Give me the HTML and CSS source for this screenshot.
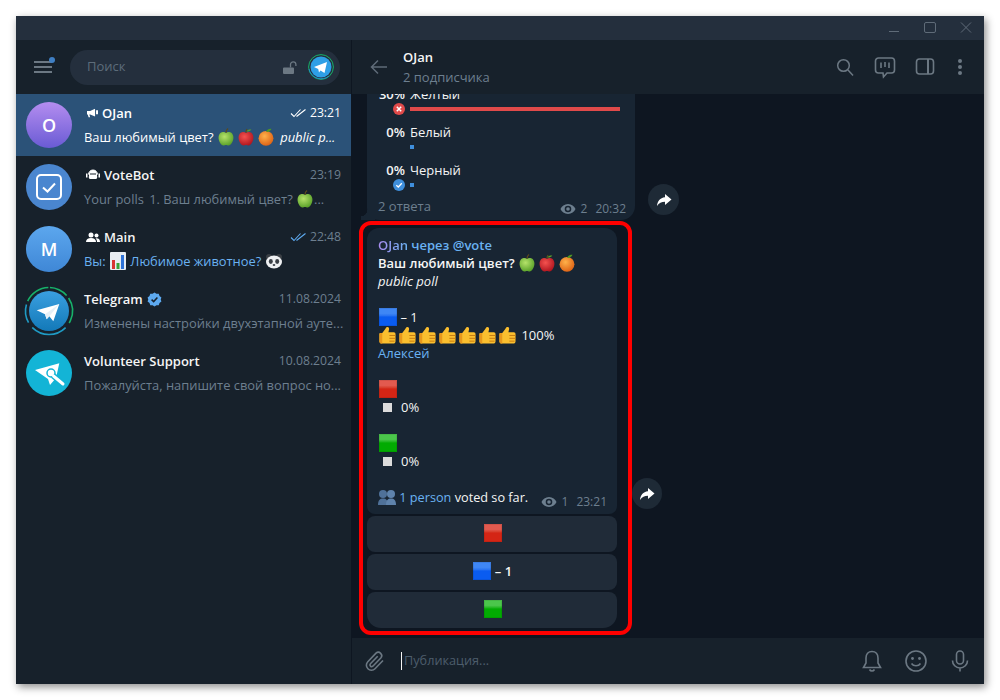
FILE: index.html
```html
<!DOCTYPE html>
<html lang="ru">
<head>
    <meta charset="UTF-8">
    <title>Telegram</title>
    <link rel="stylesheet" href="styles.css">
</head>
<body>
    <svg class="defs" aria-hidden="true">
        <defs>
            <radialGradient id="g-green" cx="40%" cy="35%" r="75%"><stop offset="0" stop-color="#b5e26a"/><stop offset="1" stop-color="#4f9a22"/></radialGradient>
            <radialGradient id="g-red" cx="40%" cy="35%" r="75%"><stop offset="0" stop-color="#f4524f"/><stop offset="1" stop-color="#a80f1a"/></radialGradient>
            <radialGradient id="g-orange" cx="40%" cy="35%" r="75%"><stop offset="0" stop-color="#ffb14a"/><stop offset="1" stop-color="#d9590f"/></radialGradient>
            <linearGradient id="g-tg" x1="0" y1="0" x2="0" y2="1"><stop offset="0" stop-color="#3a9fe0"/><stop offset="1" stop-color="#1379b8"/></linearGradient>
            <symbol id="apple-green" viewBox="1 .5 16 17">
                <path d="M9 5c2-1.400 6.500-1 7 4 .3 4-2.500 8-4.500 8-1 0-1.600-.5-2.500-.5S7.500 17 6.500 17C4.500 17 1.700 13 2 9 2.500 4 7 3.600 9 5z" fill="url(#g-green)"/>
                <path d="M9 5c0-1.500.5-3 2-4" fill="none" stroke="#5b4a1c" stroke-width="1.200"/>
            </symbol>
            <symbol id="apple-red" viewBox="1 .5 16 17">
                <path d="M9 5c2-1.400 6.500-1 7 4 .3 4-2.500 8-4.500 8-1 0-1.600-.5-2.500-.5S7.500 17 6.500 17C4.500 17 1.700 13 2 9 2.500 4 7 3.600 9 5z" fill="url(#g-red)"/>
                <path d="M9 5c0-1.500.3-2.500 1-3.500" fill="none" stroke="#5b4a1c" stroke-width="1.200"/>
                <path d="M9.500 3.500c1-1.500 3-2 4.500-1.500-.8 1.500-2.500 2-4.500 1.500z" fill="#5aa02c"/>
            </symbol>
            <symbol id="orange" viewBox="1.500 1 15 16.500">
                <circle cx="9" cy="10.500" r="6.800" fill="url(#g-orange)"/>
                <path d="M9 4.500c.8-1.800 2.800-3 5-2.800-.7 2-2.800 3.200-5 2.800z" fill="#4f9a22"/>
            </symbol>
            <symbol id="thumb" viewBox="-.5 0 19 18">
                <path d="M1 8c0-.6.4-1 1-1h2l3-4C8 1 8.500.5 9.500.5c1.300 0 2 1 1.700 2.500L10.500 6H16c1.500 0 2 1 2 2v7.500c0 1.500-1 2.500-2.500 2.500h-12C2 18 1 17 1 15.500z" fill="#fbbf2f"/>
                <path d="M4 7.500V18H3.500C2 18 1 17 1 15.500V8c0-.6.4-1 1-1h2z" fill="#e9981c"/>
                <path d="M11.500 9.500H18M11.500 12.500H18M11.500 15.500H17" stroke="#c67a10" stroke-width="1"/>
            </symbol>
            <symbol id="eye" viewBox="0 0 16 12">
                <path d="M8 1C4.500 1 1.700 3.200.5 6 1.700 8.800 4.500 11 8 11s6.300-2.200 7.500-5C14.300 3.200 11.500 1 8 1zm0 8.300A3.300 3.300 0 1 1 8 2.700a3.300 3.300 0 0 1 0 6.600zM8 4.200a1.800 1.800 0 1 0 0 3.600 1.800 1.800 0 0 0 0-3.600z" fill="currentColor"/>
            </symbol>
            <symbol id="share" viewBox="0 0 16 14">
                <path d="M9 1l6.500 5.500L9 12V8.700C5.500 8.700 3 9.800 1 13c.4-4.800 3-8.300 8-8.800z" fill="#fff"/>
            </symbol>
            <symbol id="checks" viewBox="0 0 17 10">
                <path d="M1 5.500 4 8.500 10.500 1.500M6.500 8.500 15.500 1.500" fill="none" stroke="currentColor" stroke-width="1.100"/>
            </symbol>
        </defs>
    </svg>

    <div class="window">
        <div class="titlebar">
            <svg class="win-btn" viewBox="0 0 12 12"><path d="M1 9.500h10" stroke="#5f6b78" fill="none"/></svg>
            <svg class="win-btn" viewBox="0 0 12 12"><rect x=".5" y=".5" width="11" height="10" rx="1.500" stroke="#5f6b78" fill="none"/></svg>
            <svg class="win-btn" viewBox="0 0 12 12"><path d="M1 .5l10 10M11 .5 1 10.500" stroke="#5f6b78" fill="none"/></svg>
        </div>
        <div class="main">
            <aside class="sidebar">
                <div class="side-head">
                    <button class="menu-btn">
                        <span class="bar"></span><span class="bar"></span><span class="bar"></span>
                        <span class="dot"></span>
                    </button>
                    <div class="search">
                        <span class="search-text">Поиск</span>
                        <svg class="lock" viewBox="0 0 14 13"><path d="M1 6.500h9a1 1 0 0 1 1 1V12a1 1 0 0 1-1 1H1a1 1 0 0 1-1-1V7.500a1 1 0 0 1 1-1z" fill="#6c7883"/><path d="M7.500 6.500V3.500a2.700 2.700 0 0 1 5.400 0V5" fill="none" stroke="#6c7883" stroke-width="1.300"/></svg>
                        <svg class="story" viewBox="0 0 26 26">
                            <circle cx="13" cy="13" r="12.400" fill="none" stroke="#17b26a" stroke-width="1"/>
                            <path d="M1 15a12.400 12.400 0 0 0 20 7" fill="none" stroke="#1f8fc4" stroke-width="1"/>
                            <circle cx="13" cy="13" r="10.500" fill="#2e9fe6"/>
                            <path d="M6 13 19 8 16.500 19l-4-2.500-1.500 2-.8-3.500z" fill="#fff"/>
                        </svg>
                    </div>
                </div>

                <div class="chat active">
                    <div class="avatar av-purple">O</div>
                    <div class="chat-body">
                        <div class="chat-top">
                            <svg class="kind kind-small" viewBox="0 0 14 12"><path d="M0 3.500h4L9.500.8a.5.5 0 0 1 .8.4v8.600a.5.5 0 0 1-.8.400L4 8H3l1 3.500H2L1 8H0zM11.500 2.500h2.500v5h-2.500z" fill="#fff"/></svg>
                            <span class="name">OJan</span>
                            <svg class="tick" viewBox="0 0 17 10"><use href="#checks"/></svg>
                            <span class="time">23:21</span>
                        </div>
                        <div class="chat-text">Ваш любимый цвет? <svg class="emoji"><use href="#apple-green"/></svg><svg class="emoji"><use href="#apple-red"/></svg><svg class="emoji"><use href="#orange"/></svg> <i>public p...</i></div>
                    </div>
                </div>

                <div class="chat">
                    <div class="avatar av-blue">
                        <svg class="av-icon" viewBox="0 0 46 46"><rect x="11" y="11" width="24" height="24" rx="4" fill="none" stroke="#fff" stroke-width="2"/><path d="M17 23.500l4.500 4L29 19.500" fill="none" stroke="#fff" stroke-width="2"/></svg>
                    </div>
                    <div class="chat-body">
                        <div class="chat-top">
                            <svg class="kind" viewBox="0 0 14 12"><path d="M3 7V5a4 4 0 0 1 8 0v2a2 2 0 0 1-2 3H5a2 2 0 0 1-2-3z" fill="#fff"/><path d="M2.500 5.500a4.500 4.500 0 0 1 9 0" fill="none" stroke="#fff"/><rect x="0" y="4.500" width="1.500" height="4" fill="#fff"/><rect x="12.500" y="4.500" width="1.500" height="4" fill="#fff"/><rect x="4" y="4.500" width="6" height="1" fill="#17212b"/></svg>
                            <span class="name">VoteBot</span>
                            <span class="time">23:19</span>
                        </div>
                        <div class="chat-text">Your polls <span class="gap"></span>1. Ваш любимый цвет? <svg class="emoji tight"><use href="#apple-green"/></svg>...</div>
                    </div>
                </div>

                <div class="chat">
                    <div class="avatar av-sky">M</div>
                    <div class="chat-body">
                        <div class="chat-top">
                            <svg class="kind" viewBox="0 0 14 12"><circle cx="5" cy="4" r="2.500" fill="#fff"/><path d="M0 11c0-2.800 2-4 5-4s5 1.200 5 4z" fill="#fff"/><circle cx="10.500" cy="4.500" r="2" fill="#fff"/><path d="M10.500 7.300c2 0 3.500 1 3.500 3.700h-3c0-1.500-.3-2.700-1.500-3.500z" fill="#fff"/></svg>
                            <span class="name">Main</span>
                            <svg class="tick tick-blue" viewBox="0 0 17 10"><use href="#checks"/></svg>
                            <span class="time">22:48</span>
                        </div>
                        <div class="chat-text link">Вы: <svg class="emoji tight" viewBox="0 0 18 18"><rect x="1" width="16" height="18" rx="1" fill="#e8edf2"/><rect x="3" y="8" width="3" height="9" fill="#d93434"/><rect x="7.500" y="11" width="3" height="6" fill="#3aa23a"/><rect x="12" y="3" width="3" height="14" fill="#2f72d6"/></svg> Любимое животное? <svg class="emoji" viewBox="0 0 18 18"><circle cx="4" cy="5" r="3" fill="#3a3f45"/><circle cx="14" cy="5" r="3" fill="#3a3f45"/><ellipse cx="9" cy="10" rx="8" ry="6.500" fill="#eef0f2"/><ellipse cx="5.800" cy="9.500" rx="2" ry="2.400" fill="#3a3f45"/><ellipse cx="12.200" cy="9.500" rx="2" ry="2.400" fill="#3a3f45"/><ellipse cx="9" cy="13" rx="1.300" ry="1" fill="#3a3f45"/></svg></div>
                    </div>
                </div>

                <div class="chat">
                    <div class="avatar">
                        <svg class="av-icon" viewBox="0 0 46 46">
                            <circle cx="23" cy="23" r="23.500" fill="none" stroke="#17b26a" stroke-width="1.600" stroke-dasharray="25.800 1.600 18.900 3.300 26.200 72" transform="rotate(-155 23 23)"/>
                            <circle cx="23" cy="23" r="23.500" fill="none" stroke="#1f9bc4" stroke-width="1.600" stroke-dasharray="36.900 6.200 18.500 86" transform="rotate(45 23 23)"/>
                            <circle cx="23" cy="23" r="20" fill="url(#g-tg)"/>
                            <path d="M33.300 16 10.700 22.300 19 26.300 20.700 31.300 23.300 28.300 27.300 33.300z" fill="#fff"/>
                            <path d="M33.300 16 19 26.300 20.700 31.300 23.300 28.300z" fill="#e6f0f7"/>
                        </svg>
                    </div>
                    <div class="chat-body">
                        <div class="chat-top">
                            <span class="name">Telegram</span>
                            <svg class="badge" viewBox="0 0 18 18"><path d="M9 .5l2.300 1.700 2.800-.1.900 2.700 2.300 1.700-.8 2.500.8 2.500-2.300 1.700-.9 2.700-2.800-.1L9 17.500l-2.300-1.700-2.800.1-.9-2.700L.7 11.500 1.500 9 .7 6.500 3 4.800l.9-2.700 2.800.1z" fill="#5da9ef"/><path d="M5.500 9.200 8 11.500l4.500-4.800" fill="none" stroke="#17212b" stroke-width="1.800"/></svg>
                            <span class="time">11.08.2024</span>
                        </div>
                        <div class="chat-text">Изменены настройки двухэтапной ауте...</div>
                    </div>
                </div>

                <div class="chat">
                    <div class="avatar av-teal">
                        <svg class="av-icon" viewBox="0 0 46 46">
                            <path d="M9 20 33.300 13.300 30 28 24 35 22 29z" fill="#fff"/>
                            <circle cx="25" cy="23" r="4" fill="none" stroke="#13b4d6" stroke-width="1.500"/>
                            <path d="M27 25.500 37 34" stroke="#13b4d6" stroke-width="6" fill="none"/>
                            <path d="M27.500 26 37 34" stroke="#fff" stroke-width="3" stroke-linecap="round" fill="none"/>
                        </svg>
                    </div>
                    <div class="chat-body">
                        <div class="chat-top">
                            <span class="name">Volunteer Support</span>
                            <span class="time">10.08.2024</span>
                        </div>
                        <div class="chat-text">Пожалуйста, напишите свой вопрос но...</div>
                    </div>
                </div>
            </aside>

            <section class="conversation">
                <header class="conv-head">
                    <svg class="back" viewBox="0 0 18 16"><path d="M17 8H2M8 1.500 1.500 8 8 14.500" fill="none" stroke="#5f6b78" stroke-width="1.500"/></svg>
                    <div class="conv-title">
                        <div class="conv-name">OJan</div>
                        <div class="conv-sub">2 подписчика</div>
                    </div>
                    <svg class="head-icon" viewBox="0 0 24 24"><circle cx="10.500" cy="10.500" r="5.800" fill="none" stroke="#6c7883" stroke-width="1.500"/><path d="M15 15l5 5.500" stroke="#6c7883" stroke-width="1.500"/></svg>
                    <svg class="head-icon" viewBox="0 0 24 24"><path d="M5.500 3h13A3 3 0 0 1 21.500 6v9a3 3 0 0 1-3 3H14l-3.500 4-.5-4H5.500a3 3 0 0 1-3-3V6a3 3 0 0 1 3-3z" fill="none" stroke="#6c7883" stroke-width="1.600"/><path d="M8 7.500v5.500M12 7v5M16 7.500v5.500" stroke="#6c7883" stroke-width="1.600"/></svg>
                    <svg class="head-icon" viewBox="0 0 24 24"><rect x="3.500" y="4" width="17" height="15" rx="3" fill="none" stroke="#6c7883" stroke-width="1.600"/><path d="M15 4v15" stroke="#6c7883" stroke-width="2"/></svg>
                    <svg class="head-icon dots" viewBox="0 0 8 24"><circle cx="4" cy="6" r="2" fill="#6c7883"/><circle cx="4" cy="12" r="2" fill="#6c7883"/><circle cx="4" cy="18" r="2" fill="#6c7883"/></svg>
                </header>

                <div class="messages">
                    <div class="msg-row first">
                        <div class="bubble poll">
                            <div class="poll-row">
                                <span class="pct">30%</span><span>Желтый</span>
                                <svg class="mark" viewBox="0 0 12 12"><circle cx="6" cy="6" r="6" fill="#e04a4a"/><path d="M3.800 3.800l4.400 4.400M8.200 3.800 3.800 8.200" stroke="#fff" stroke-width="1.500"/></svg>
                                <span class="poll-bar full"></span>
                            </div>
                            <div class="poll-row">
                                <span class="pct">0%</span><span>Белый</span>
                                <span></span><span class="poll-bar"></span>
                            </div>
                            <div class="poll-row">
                                <span class="pct">0%</span><span>Черный</span>
                                <svg class="mark" viewBox="0 0 12 12"><circle cx="6" cy="6" r="6" fill="#3f8fdc"/><path d="M3.300 6.200 5.300 8 8.800 4.300" fill="none" stroke="#fff" stroke-width="1.300"/></svg>
                                <span class="poll-bar"></span>
                            </div>
                            <div class="poll-foot">
                                <span class="answers">2 ответа</span>
                                <span class="meta"><svg class="eye"><use href="#eye"/></svg>2<span class="meta-time">20:32</span></span>
                            </div>
                        </div>
                        <button class="share"><svg class="share-icon"><use href="#share"/></svg></button>
                    </div>

                    <div class="msg-row">
                        <div class="highlight">
                            <div class="bubble post">
                                <div class="sender"><span class="sender-name">OJan</span> через @vote</div>
                                <div class="strong">Ваш любимый цвет? <svg class="emoji"><use href="#apple-green"/></svg><svg class="emoji"><use href="#apple-red"/></svg><svg class="emoji"><use href="#orange"/></svg></div>
                                <div><i>public poll</i></div>
                                <div class="blank"></div>
                                <div><span class="sq blue"></span> – 1</div>
                                <div class="thumbs"><svg class="emoji"><use href="#thumb"/></svg><svg class="emoji"><use href="#thumb"/></svg><svg class="emoji"><use href="#thumb"/></svg><svg class="emoji"><use href="#thumb"/></svg><svg class="emoji"><use href="#thumb"/></svg><svg class="emoji"><use href="#thumb"/></svg><svg class="emoji"><use href="#thumb"/></svg> 100%</div>
                                <div class="link">Алексей</div>
                                <div class="blank"></div>
                                <div><span class="sq red"></span></div>
                                <div class="vote-line"><span class="white-sq"></span>0%</div>
                                <div class="blank"></div>
                                <div><span class="sq green"></span></div>
                                <div class="vote-line"><span class="white-sq"></span>0%</div>
                                <div class="blank"></div>
                                <div class="post-foot">
                                    <span class="foot-text"><svg class="emoji tight" viewBox="0 0 18 18"><circle cx="5" cy="6" r="4" fill="#4f7199"/><path d="M0 17c0-5 2-6.500 5-6.500s5 1.500 5 6.500z" fill="#4f7199"/><circle cx="13" cy="6" r="4" fill="#5f83ac"/><path d="M8 17c0-5 2-6.500 5-6.500s5 1.500 5 6.500z" fill="#5f83ac"/></svg> <span class="link">1 person</span> voted so far.</span>
                                    <span class="meta"><svg class="eye"><use href="#eye"/></svg>1<span class="meta-time">23:21</span></span>
                                </div>
                            </div>
                            <div class="keyboard">
                                <button class="key"><span class="sq red"></span></button>
                                <button class="key"><span class="sq blue"></span> – 1</button>
                                <button class="key"><span class="sq green"></span></button>
                            </div>
                        </div>
                        <button class="share second"><svg class="share-icon"><use href="#share"/></svg></button>
                    </div>
                </div>

                <footer class="composer">
                    <svg class="clip" viewBox="0 0 24 24"><path d="M20 11.500 12 19.700a5 5 0 0 1-7.200-7L13 4.200a3.400 3.400 0 0 1 4.800 4.800l-8 8.200a1.700 1.700 0 0 1-2.400-2.400l7.300-7.500" fill="none" stroke="#6c7883" stroke-width="1.600"/></svg>
                    <span class="caret"></span>
                    <span class="placeholder">Публикация...</span>
                    <svg class="foot-icon" viewBox="0 0 24 24"><path d="M12 2.500c-3.800 0-6 2.900-6 6.500v5L3.500 18.500h17L18 14V9c0-3.600-2.200-6.500-6-6.500zM9.500 20.500c.6 1 1.500 1.500 2.500 1.500s1.900-.5 2.500-1.500" fill="none" stroke="#6c7883" stroke-width="1.600"/></svg>
                    <svg class="foot-icon" viewBox="0 0 24 24"><circle cx="12" cy="12" r="10" fill="none" stroke="#6c7883" stroke-width="1.600"/><circle cx="8.500" cy="9.500" r="1.400" fill="#6c7883"/><circle cx="15.500" cy="9.500" r="1.400" fill="#6c7883"/><path d="M7.500 14.500c1 1.500 2.700 2.300 4.500 2.300s3.500-.8 4.500-2.300" fill="none" stroke="#6c7883" stroke-width="1.600"/></svg>
                    <svg class="foot-icon" viewBox="0 0 24 24"><rect x="8.500" y="2" width="7" height="13" rx="3.500" fill="none" stroke="#6c7883" stroke-width="1.600"/><path d="M4.500 11.500a7.500 7.500 0 0 0 15 0M12 19v3.500" fill="none" stroke="#6c7883" stroke-width="1.600"/></svg>
                </footer>
            </section>
        </div>
    </div>
</body>
</html>
```

FILE: styles.css
```css
html, body {
    height: 100%;
    overflow: hidden;
}
body {
    margin: 0;
    padding: 16px;
    box-sizing: border-box;
    background-color: #fff;
    font-family: 'Open Sans', sans-serif;
    font-size: 13px;
    line-height: 18px;
    color: #f5f5f5;
}
.defs {
    position: absolute;
    width: 0;
    height: 0;
}
button {
    padding: 0;
    border: none;
    font: inherit;
    color: inherit;
}
.window {
    height: 668px;
    display: flex;
    flex-direction: column;
    box-shadow: 2px 3px 8px rgba(0, 0, 0, 0.45);
}
.titlebar {
    height: 24px;
    flex: none;
    display: flex;
    justify-content: flex-end;
    align-items: center;
    gap: 24px;
    padding-right: 12px;
    background-color: #242f3d;
}
.win-btn {
    width: 12px;
    height: 12px;
}
.main {
    flex: 1;
    min-height: 0;
    display: flex;
}

/* left column */
.sidebar {
    width: 335px;
    flex: none;
    background-color: #17212b;
    border-right: 1px solid #0e1621;
}
.side-head {
    height: 54px;
    display: flex;
    align-items: center;
    padding: 0 11px 0 18px;
    box-sizing: border-box;
}
.menu-btn {
    position: relative;
    width: 18px;
    height: 12px;
    display: flex;
    flex-direction: column;
    justify-content: space-between;
    background: none;
    margin-right: 18px;
}
.bar {
    height: 1.6px;
    background-color: #6c7883;
}
.dot {
    position: absolute;
    top: -4px;
    right: -3px;
    width: 6px;
    height: 6px;
    border-radius: 50%;
    background-color: #3f7fc4;
}
.search {
    flex: 1;
    height: 35px;
    display: flex;
    align-items: center;
    padding: 0 6px 0 17px;
    border-radius: 18px;
    background-color: #242f3d;
}
.search-text {
    flex: 1;
    padding-bottom: 2px;
    color: #5d6c7a;
}
.lock {
    width: 14px;
    height: 13px;
    margin-right: 11px;
}
.story {
    width: 26px;
    height: 26px;
}
.chat {
    height: 62px;
    display: flex;
    align-items: center;
    padding: 0 10px;
    box-sizing: border-box;
}
.chat.active {
    background-color: #2b5278;
}
.avatar {
    width: 46px;
    height: 46px;
    flex: none;
    margin-right: 12px;
    border-radius: 50%;
    display: flex;
    align-items: center;
    justify-content: center;
    font-size: 18px;
    font-weight: 600;
    color: #fff;
}
.av-icon {
    width: 46px;
    height: 46px;
    overflow: visible;
}
.av-purple {
    background: linear-gradient(#b48df0, #6a5bd4);
}
.av-blue {
    background-color: #4a86cf;
}
.av-sky {
    background: linear-gradient(#5ca7ee, #3f87d6);
}
.av-teal {
    background-color: #13b4d6;
}
.chat-body {
    flex: 1;
    min-width: 0;
}
.chat-top {
    display: flex;
    align-items: center;
    height: 18px;
    margin-bottom: 6px;
}
.kind {
    width: 14px;
    height: 12px;
    margin: 0 4px 0 2px;
}
.kind-small {
    width: 11px;
    height: 10px;
    margin-left: 3px;
}
.name {
    font-weight: 600;
    color: #f5f5f5;
    flex: none;
}
.badge {
    width: 15px;
    height: 15px;
    margin-left: 4px;
}
.tick {
    width: 17px;
    height: 10px;
    margin-left: auto;
    margin-right: 3px;
    color: #fff;
}
.tick-blue {
    color: #5da9ef;
}
.time {
    font-size: 12.2px;
    color: #6d7f8f;
}
.name + .time,
.badge + .time {
    margin-left: auto;
}
.chat-text {
    height: 18px;
    font-size: 12.9px;
    white-space: nowrap;
    color: #6d7f8f;
}
.gap {
    display: inline-block;
    width: 2px;
}
.active .chat-text,
.active .time,
.active .name {
    color: #fff;
}
.chat-text.link,
.link {
    color: #6ab2f2;
}
.emoji {
    width: 18px;
    height: 18px;
    margin-right: 2px;
    vertical-align: top;
}
.emoji.tight {
    margin-right: 0;
}

/* conversation */
.conversation {
    flex: 1;
    min-width: 0;
    display: flex;
    flex-direction: column;
    background-color: #0e1621;
}
.conv-head {
    height: 54px;
    flex: none;
    display: flex;
    align-items: center;
    padding: 0 20px 0 18px;
    box-sizing: border-box;
    background-color: #17212b;
    position: relative;
    z-index: 1;
}
.back {
    width: 18px;
    height: 16px;
    margin-right: 15px;
}
.conv-title {
    flex: 1;
}
.conv-name {
    font-weight: 600;
    margin-bottom: 2px;
}
.conv-sub {
    color: #6d7f8f;
}
.head-icon {
    width: 24px;
    height: 24px;
    margin-left: 16px;
}
.head-icon.dots {
    width: 8px;
    margin-left: 19px;
}
.messages {
    flex: 1;
    min-height: 0;
    display: flex;
    flex-direction: column;
    justify-content: flex-end;
    gap: 1px;
    padding: 0 0 3px 7px;
    overflow: hidden;
}
.msg-row {
    display: flex;
    align-items: flex-end;
    flex: none;
}
.msg-row.first {
    padding-left: 8px;
}
.bubble {
    background-color: #182533;
    border-radius: 12px;
}
.poll {
    position: relative;
    width: 268px;
    box-sizing: border-box;
    padding: 0 9px 5px 11px;
    border-radius: 0 0 14px 12px;
}
/* tail of the bubble */
.poll::before {
    content: "";
    position: absolute;
    left: -6px;
    bottom: 0;
    width: 14px;
    height: 10px;
    background: radial-gradient(circle at 0 0, transparent 6px, #182533 6.5px);
}
.poll-row {
    display: grid;
    grid-template-columns: 27px 1fr;
    grid-template-rows: 18px 12px;
    column-gap: 5px;
    height: 30px;
    margin-bottom: 8px;
    align-items: center;
}
.pct {
    text-align: right;
    font-weight: 600;
}
.mark {
    width: 12px;
    height: 12px;
    justify-self: end;
}
.poll-bar {
    width: 4px;
    height: 4px;
    background-color: #3f8fdc;
}
.poll-bar.full {
    width: 210px;
    background-color: #e04a4a;
}
.poll-foot {
    display: flex;
    justify-content: space-between;
    margin-top: -2px;
}
.answers {
    color: #6d7f8f;
}
.meta {
    display: flex;
    align-items: center;
    font-size: 12px;
    color: #6d7f8f;
    margin-bottom: -5px;
}
.eye {
    width: 16px;
    height: 12px;
    margin-right: 5px;
}
.meta-time {
    margin-left: 8px;
}
.share {
    width: 31px;
    height: 31px;
    flex: none;
    border-radius: 50%;
    display: flex;
    align-items: center;
    justify-content: center;
    background-color: #1e2a36;
    margin: 0 0 5px 13px;
}
.share.second {
    width: 30px;
    height: 31px;
    margin: 0 0 126px 0;
}
.share-icon {
    width: 16px;
    height: 14px;
}
.highlight {
    width: 273px;
    box-sizing: border-box;
    padding: 3px 11px 3px 4px;
    border: 4px solid #f00;
    border-radius: 12px;
}
.post {
    padding: 8px 10px 8px 11px;
    border-radius: 12px 12px 8px 8px;
}
.sender {
    font-weight: 600;
    color: #6ab2f2;
}
.sender-name {
    background: linear-gradient(90deg, #a98cf0, #6ab2f2);
    -webkit-background-clip: text;
    background-clip: text;
    color: transparent;
}
.strong {
    font-weight: 600;
}
.blank {
    height: 18px;
}
.sq {
    display: inline-block;
    width: 18px;
    height: 18px;
    vertical-align: top;
    margin-left: 1px;
    box-shadow: inset 0 0 0 1px rgba(0, 0, 0, 0.08);
}
.sq.blue {
    background: linear-gradient(#3f87f5 0 30%, #2a74f2 42%, #0a5cf0 50%);
}
.sq.red {
    background: linear-gradient(#e25a4f 0 30%, #d8402f 42%, #d42515 50%);
}
.sq.green {
    background: linear-gradient(#4bc64b 0 30%, #24b724 42%, #02ab02 50%);
}
.vote-line {
    display: flex;
    align-items: center;
    padding-left: 5px;
}
.white-sq {
    width: 9px;
    height: 9px;
    margin-right: 9px;
    background-color: #dcdcdc;
}
.post-foot {
    display: flex;
    justify-content: space-between;
    align-items: flex-end;
}
.foot-text {
    font-size: 12.7px;
    white-space: nowrap;
}
.keyboard {
    display: flex;
    flex-direction: column;
    gap: 2px;
    margin-top: 2px;
}
.key {
    height: 36px;
    padding-bottom: 2px;
    border-radius: 8px;
    background-color: #202b38;
    font-weight: 600;
    color: #f5f5f5;
    display: flex;
    align-items: center;
    justify-content: center;
    gap: 4px;
}
.key:last-child {
    border-radius: 8px 8px 14px 14px;
}
.composer {
    height: 46px;
    flex: none;
    display: flex;
    align-items: center;
    padding: 0 12px 0 11px;
    box-sizing: border-box;
    background-color: #17212b;
}
.clip {
    width: 24px;
    height: 24px;
    margin-right: 14px;
}
.caret {
    width: 1px;
    height: 18px;
    margin-right: 2px;
    background-color: #f5f5f5;
}
.placeholder {
    flex: 1;
    padding-bottom: 2px;
    font-size: 12.7px;
    color: #4d5d6c;
}
.foot-icon {
    width: 24px;
    height: 24px;
    margin-left: 20px;
}
```
